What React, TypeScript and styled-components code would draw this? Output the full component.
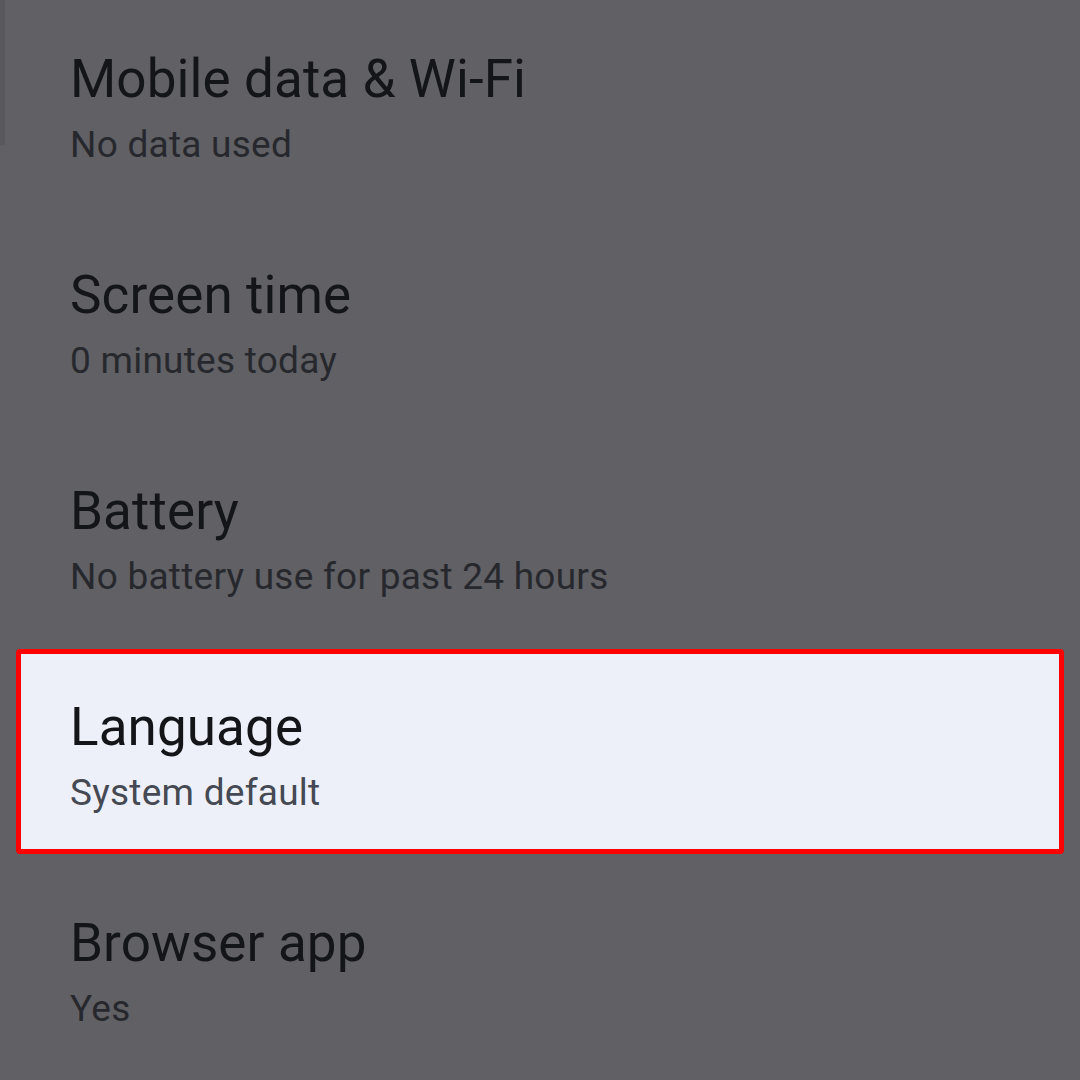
import React from 'react';
import styled, { createGlobalStyle } from 'styled-components';

const GlobalStyle = createGlobalStyle`
  html, body {
    margin: 0;
    padding: 0;
    background: #606065;
  }
  body {
    font-family: Roboto, "Noto Sans", sans-serif;
    -webkit-font-smoothing: antialiased;
  }
`;

const Screen = styled.div`
  position: relative;
  width: 1080px;
  height: 1080px;
  overflow: hidden;
  background: #606065;
`;

// faint scrollbar thumb at the left edge
const ScrollThumb = styled.div`
  position: absolute;
  left: 0;
  top: 0;
  width: 5px;
  height: 145px;
  background: #58585d;
`;

const List = styled.div`
  display: flex;
  flex-direction: column;
  margin-top: -5px;
`;

const Row = styled.div<{ $selected?: boolean }>`
  box-sizing: border-box;
  display: flex;
  flex-direction: column;
  height: ${(p) => (p.$selected ? '205px' : '216px')};
  padding: ${(p) => (p.$selected ? '43px 0 0 49px' : '54px 0 0 70px')};
  margin: ${(p) => (p.$selected ? '6px 16px 5px' : '0')};
  background: ${(p) => (p.$selected ? '#eef0f9' : 'transparent')};
  border: ${(p) => (p.$selected ? '5px solid #ff0000' : 'none')};
  border-radius: ${(p) => (p.$selected ? '4px' : '0')};
`;

const Title = styled.div`
  font-size: 53px;
  line-height: 60px;
  letter-spacing: 0.1px;
  color: #141519;
  white-space: nowrap;
`;

const Subtitle = styled.div<{ $selected?: boolean }>`
  margin-top: 14px;
  font-size: 37px;
  line-height: 44px;
  letter-spacing: 0.25px;
  color: ${(p) => (p.$selected ? '#454953' : '#27282d')};
  white-space: nowrap;
`;

const items = [
  { title: 'Mobile data & Wi-Fi', sub: 'No data used' },
  { title: 'Screen time', sub: '0 minutes today' },
  { title: 'Battery', sub: 'No battery use for past 24 hours' },
  { title: 'Language', sub: 'System default', selected: true },
  { title: 'Browser app', sub: 'Yes' },
];

export default function App() {
  return (
    <>
      <GlobalStyle />
      <Screen>
        <ScrollThumb />
        <List>
          {items.map((it) => (
            <Row key={it.title} $selected={it.selected}>
              <Title>{it.title}</Title>
              <Subtitle $selected={it.selected}>{it.sub}</Subtitle>
            </Row>
          ))}
        </List>
      </Screen>
    </>
  );
}
